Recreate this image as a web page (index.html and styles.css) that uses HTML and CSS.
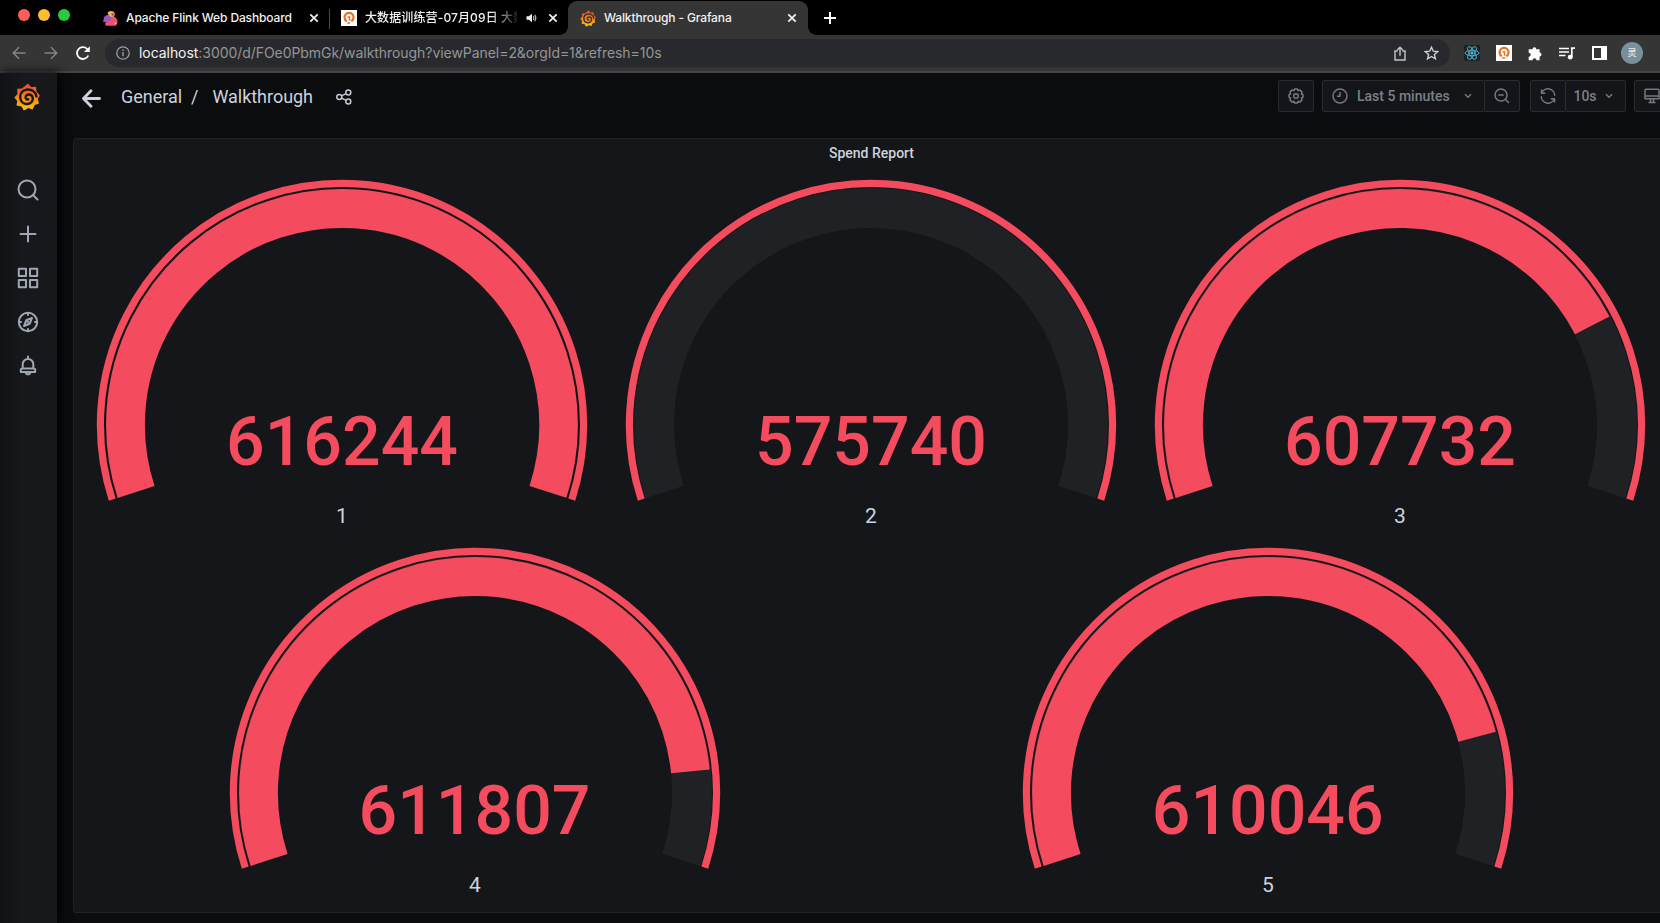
FILE: index.html
```html
<!DOCTYPE html>
<html lang="en">
<head>
<meta charset="utf-8">
<title>Walkthrough - Grafana</title>
<link rel="stylesheet" href="styles.css">
</head>
<body>
<svg class="defs" width="0" height="0">
  <defs>
    <linearGradient id="flame" x1="0" y1="0" x2="0" y2="1"><stop offset="0.1" stop-color="#f04e28"/><stop offset="1" stop-color="#fcc40c"/></linearGradient>
    <symbol id="grafana" viewBox="0 0 26 28">
      <path fill="url(#flame)" d="M14 0.500 L17 4 L22 3.800 L22.500 8.500 L25.800 12.500 L23.800 16 L25 20.500 L20.800 22 L18.500 26.500 L14.500 25 L9.800 27.500 L7.500 23.500 L2.500 22.500 L3.200 18 L0.300 14.500 L3.500 11 L3.200 5.800 L8 5.500 Z"/>
      <path fill="none" stroke="var(--hole)" stroke-width="2.400" stroke-linecap="round" d="M22.500 13.500 C21.500 8.500 17.500 6.300 13.500 6.500 C8.500 6.800 6 10.500 6.200 14.500 C6.500 18.500 9.500 21.200 13.500 21 C17 20.800 19 18 18.800 15.200 C18.500 12.600 16.500 11.200 14.300 11.500 C12 11.900 11.200 13.800 11.800 15.300 C12.300 16.400 13.300 16.700 14.200 16.300"/>
    </symbol>
    <symbol id="orange-q" viewBox="0 0 16 16">
      <rect width="16" height="16" fill="#fff"/>
      <path fill="none" stroke="#ec6f22" stroke-width="2.200" d="M5.800 11.200 A4.500 4.500 0 1 1 10.300 11.200"/>
      <path fill="none" stroke="#ec6f22" stroke-width="1.500" d="M6.500 7 H8.600 V10.700 M6.300 13 H9.200"/>
    </symbol>
    <symbol id="close" viewBox="0 0 10 10"><path d="M1.300 1.300 L8.700 8.700 M8.700 1.300 L1.300 8.700" stroke="#f4f4f4" stroke-width="1.700" fill="none"/></symbol>
  </defs>
</svg>

<div class="screen">
  <div class="tabstrip">
    <div class="lights"><i class="red"></i><i class="yellow"></i><i class="green"></i></div>
    <div class="tab tab-flink">
      <svg width="17" height="17" viewBox="0 0 17 17"><path fill="#e6526f" d="M6 8 C8 6 12 5.500 14 8 C15.500 9.500 16 11.500 15 14 L13.500 15.800 H4 C2.500 14.500 3.500 12 6 8 Z"/><path fill="#9a55c0" d="M2.500 6.500 C4 5 7 4.500 9 6 C10.500 8 9 10 7 11 C5 12 3 12.500 0.800 11.500 C2 10 1.500 8.500 2.500 6.500 Z"/><path fill="#e9b765" d="M5.500 2.500 L8 1 L11.500 1.500 L13 4 L12 6.500 L9 7 L6.500 5 Z"/><path fill="#d24a52" d="M9 3.500 L12 3 L12.500 5.500 L10 6 Z"/><path fill="#f0c36a" d="M12.500 13 L14 12.500 L14.500 14 L13 14.500 Z"/></svg>
      <span class="tab-title">Apache Flink Web Dashboard</span>
      <svg class="x" width="10" height="10"><use href="#close"/></svg>
    </div>
    <div class="tab tab-video">
      <svg width="16" height="16"><use href="#orange-q"/></svg>
      <span class="tab-title fade">大数据训练营-07月09日 大数</span>
      <svg class="speaker" width="11" height="10" viewBox="0 0 11 10"><path fill="#eee" d="M0.500 3.300 H2.800 L6 0.800 V9.200 L2.800 6.700 H0.500 Z"/><path fill="none" stroke="#bbb" stroke-width="1.200" d="M7.300 3 Q8.500 5 7.300 7 M8.800 1.800 Q10.800 5 8.800 8.200"/></svg>
      <svg class="x" width="10" height="10"><use href="#close"/></svg>
    </div>
    <div class="tab tab-active">
      <svg class="fav" width="16" height="17"><use href="#grafana"/></svg>
      <span class="tab-title">Walkthrough - Grafana</span>
      <svg class="x" width="10" height="10"><use href="#close"/></svg>
    </div>
    <svg class="newtab" width="14" height="14" viewBox="0 0 14 14"><path d="M7 1 V13 M1 7 H13" stroke="#fff" stroke-width="2"/></svg>
  </div>

  <div class="toolbar">
    <div class="nav">
      <svg width="14" height="14" viewBox="0 0 14 14"><path d="M13.500 7 H1.500 M7 1.300 L1.300 7 L7 12.700" fill="none" stroke="#858585" stroke-width="1.500"/></svg>
      <svg width="14" height="14" viewBox="0 0 14 14"><path d="M0.500 7 H12.500 M7 1.300 L12.700 7 L7 12.700" fill="none" stroke="#858585" stroke-width="1.500"/></svg>
      <svg width="14" height="14" viewBox="0 0 14 14"><path d="M12.300 9.500 A5.900 5.900 0 1 1 11 2.800 L12.500 4.300" fill="none" stroke="#fff" stroke-width="1.800"/><path d="M13.800 0.200 V6 H8 Z" fill="#fff"/></svg>
    </div>
    <div class="omnibox">
      <svg width="14" height="14" viewBox="0 0 14 14"><circle cx="7" cy="7" r="6.200" fill="none" stroke="#9b9b9c" stroke-width="1.300"/><path d="M7 6 V10.300 M7 3.500 V5" stroke="#9b9b9c" stroke-width="1.400"/></svg>
      <span class="url"><b>localhost</b>:3000/d/FOe0PbmGk/walkthrough?viewPanel=2&amp;orgId=1&amp;refresh=10s</span>
      <svg class="share-up" width="12" height="15" viewBox="0 0 12 15"><path d="M3.700 5 H1 V14 H11 V5 H8.300 M6 9.800 V1.500 M3.200 4 L6 1.300 L8.800 4" fill="none" stroke="#c4c4c4" stroke-width="1.400"/></svg>
      <svg class="star" width="15" height="14" viewBox="0 0 15 14"><path d="M7.500 1.200 L9.300 5.200 L13.700 5.600 L10.400 8.500 L11.400 12.800 L7.500 10.500 L3.600 12.800 L4.600 8.500 L1.300 5.600 L5.700 5.200 Z" fill="none" stroke="#d0d0d0" stroke-width="1.400"/></svg>
    </div>
    <div class="exts">
      <svg width="16" height="16" viewBox="0 0 16 16"><rect width="16" height="16" rx="1.500" fill="#202124"/><g fill="none" stroke="#4ba9c8" stroke-width="1"><ellipse cx="8" cy="8" rx="7" ry="2.700"/><ellipse cx="8" cy="8" rx="7" ry="2.700" transform="rotate(60 8 8)"/><ellipse cx="8" cy="8" rx="7" ry="2.700" transform="rotate(120 8 8)"/></g><circle cx="8" cy="8" r="1.400" fill="#5cc4e4"/></svg>
      <svg width="16" height="16"><use href="#orange-q"/></svg>
      <svg width="15" height="15" viewBox="0 0 15 15"><path fill="#fff" d="M1 3.200 H4.500 A1.900 1.900 0 1 1 8.300 3.200 H11.600 V6.600 A1.900 1.900 0 1 1 11.600 10.400 V14.300 H8.500 A2 2 0 1 0 4.500 14.300 H0.700 V10.800 A2 2 0 1 0 0.700 6.800 V3.200 Z"/></svg>
      <svg width="16" height="13" viewBox="0 0 16 13"><path d="M0 1.500 H10 M0 5 H10 M0 8.500 H6.500 M12.800 10 V1.200 H16" fill="none" stroke="#fff" stroke-width="1.700"/><circle cx="11.200" cy="10.200" r="2.400" fill="#fff"/></svg>
      <svg class="side" width="15" height="14" viewBox="0 0 15 14"><path fill="#fff" fill-rule="evenodd" d="M0 0 H15 V14 H0 Z M2 2 V12 H9 V2 Z"/></svg>
      <span class="avatar">灵</span>
    </div>
  </div>

  <div class="app">
    <nav class="sidebar">
      <svg class="brand" width="26" height="28"><use href="#grafana"/></svg>
      <svg width="22" height="22" viewBox="0 0 22 22"><circle cx="10" cy="10" r="8.500"/><path d="M16 16 L20.500 20.500"/></svg>
      <svg width="22" height="22" viewBox="0 0 22 22"><path d="M11 3.500 V18.500 M3.500 11 H18.500"/></svg>
      <svg width="22" height="22" viewBox="0 0 22 22"><path d="M1.800 1.800 H9 V9 H1.800 Z M13 1.800 H20.200 V9 H13 Z M1.800 13 H9 V20.200 H1.800 Z M13 13 H20.200 V20.200 H13 Z"/></svg>
      <svg width="22" height="22" viewBox="0 0 22 22"><circle cx="11" cy="11" r="9.200"/><path d="M15 7 L12.800 12.700 L7 15 L9.200 9.300 Z M11 2 V4 M11 18 V20 M2 11 H4 M18 11 H20"/><circle cx="11" cy="11" r="0.600"/></svg>
      <svg width="22" height="22" viewBox="0 0 22 22"><path d="M5.700 13.500 V9.200 A5.300 5.300 0 0 1 16.300 9.200 V13.500 M11 1.500 V3.900 M5.300 13.500 H16.700 Q18.200 13.500 18.200 15 V17 H3.800 V15 Q3.800 13.500 5.300 13.500 Z M8.500 17.500 A2.600 2.600 0 0 0 13.500 17.500"/></svg>
    </nav>
    <main class="content">
      <header class="dash-head">
        <svg class="back" width="19" height="19" viewBox="0 0 19 19"><path d="M17.500 9.500 H2 M9 1.800 L1.500 9.500 L9 17.200" fill="none" stroke="#ccd2dc" stroke-width="2.800" stroke-linecap="round" stroke-linejoin="round"/></svg>
        <span class="crumb">General</span><span class="slash">/</span><span class="crumb">Walkthrough</span>
        <svg class="share" width="16" height="16" viewBox="0 0 16 16"><g fill="none" stroke="#c3c8d1" stroke-width="1.500"><circle cx="3.300" cy="8" r="2.500"/><circle cx="12.300" cy="3.400" r="2.500"/><circle cx="12.300" cy="12.600" r="2.500"/><path d="M5.500 6.900 L10.100 4.600 M5.500 9.100 L10.100 11.400"/></g></svg>
        <div class="actions">
          <span class="btn gear"><svg width="16" height="16" viewBox="0 0 16 16"><path d="M6.600 1 H9.400 L10 2.700 L11.900 1.900 L14.100 4.100 L13.300 6 L15 6.600 V9.400 L13.300 10 L14.100 11.900 L11.900 14.100 L10 13.300 L9.400 15 H6.600 L6 13.300 L4.100 14.100 L1.900 11.900 L2.700 10 L1 9.400 V6.600 L2.700 6 L1.900 4.100 L4.100 1.900 L6 2.700 Z"/><circle cx="8" cy="8" r="2.300"/></svg></span>
          <div class="group">
            <span class="btn time"><svg width="16" height="16" viewBox="0 0 16 16"><circle cx="8" cy="8" r="7"/><path d="M8 4 V8.300 H5"/></svg><span>Last 5 minutes</span><svg class="chev" width="8" height="6" viewBox="0 0 8 6"><path d="M1 1.300 L4 4.300 L7 1.300"/></svg></span>
            <span class="btn zoom"><svg width="16" height="16" viewBox="0 0 16 16"><circle cx="7" cy="7" r="6"/><path d="M4.300 7 H9.700 M11.500 11.500 L15 15"/></svg></span>
          </div>
          <div class="group">
            <span class="btn sync"><svg width="16" height="16" viewBox="0 0 16 16"><path d="M1.500 1.500 V5.300 H5.300 M1.800 5 A6.700 6.700 0 0 1 14.700 7.700 M14.500 14.500 V10.700 H10.700 M14.200 11 A6.700 6.700 0 0 1 1.300 8.300"/></svg></span>
            <span class="btn rate"><span>10s</span><svg class="chev" width="8" height="6" viewBox="0 0 8 6"><path d="M1 1.300 L4 4.300 L7 1.300"/></svg></span>
          </div>
          <span class="btn tv"><svg width="16" height="16" viewBox="0 0 16 16"><path d="M2 1.300 H14 Q15 1.300 15 2.300 V10.700 H1 V2.300 Q1 1.300 2 1.300 Z M1 8 H15 M6.500 11 V14.300 M9.500 11 V14.300 M4.500 14.500 H11.500"/></svg></span>
        </div>
      </header>
      <section class="panel">
        <h2>Spend Report</h2>
        <div class="row three">
          <svg class="gauge" viewBox="-246 -246 492 368"><circle class="ring" r="241.600" pathLength="360"/><circle class="fill" r="216.500" pathLength="360" stroke-dasharray="216 360"/><text class="value" y="40">616244</text><text class="name" y="98">1</text></svg>
          <svg class="gauge" viewBox="-246 -246 492 368"><circle class="ring" r="241.600" pathLength="360"/><circle class="track" r="216.900" pathLength="360"/><text class="value" y="40">575740</text><text class="name" y="98">2</text></svg>
          <svg class="gauge" viewBox="-246 -246 492 368"><circle class="ring" r="241.600" pathLength="360"/><circle class="track" r="216.900" pathLength="360"/><circle class="fill" r="216.500" pathLength="360" stroke-dasharray="170.600 360"/><text class="value" y="40">607732</text><text class="name" y="98">3</text></svg>
        </div>
        <div class="row two">
          <svg class="gauge" viewBox="-246 -246 492 368"><circle class="ring" r="241.600" pathLength="360"/><circle class="track" r="216.900" pathLength="360"/><circle class="fill" r="216.500" pathLength="360" stroke-dasharray="192.300 360"/><text class="value" x="-0.500" y="40.500">611807</text><text class="name" y="98.500">4</text></svg>
          <svg class="gauge" viewBox="-246 -246 492 368"><circle class="ring" r="241.600" pathLength="360"/><circle class="track" r="216.900" pathLength="360"/><circle class="fill" r="216.500" pathLength="360" stroke-dasharray="182.960 360"/><text class="value" x="-0.300" y="40.500">610046</text><text class="name" y="98.500">5</text></svg>
        </div>
      </section>
    </main>
  </div>
</div>
</body>
</html>
```
FILE: styles.css
```css
* { box-sizing: border-box; }
body { margin: 0; background: #0b0c0e; font-family: Roboto, "Noto Sans CJK SC", sans-serif; }
svg { display: block; flex: none; }
.defs { position: absolute; }
.screen { width: 1660px; height: 923px; overflow: hidden; display: flex; flex-direction: column; }

.tabstrip { height: 35px; flex: none; background: #000; display: flex; align-items: flex-start; color: #f1f1f1; font: 500 12px/18px Inter, "Noto Sans CJK SC", sans-serif; }
.lights { display: flex; gap: 8px; padding: 9px 0 0 18px; width: 102px; }
.lights i { width: 12px; height: 12px; border-radius: 50%; }
.red { background: #ff5f57; }
.yellow { background: #febc2e; }
.green { background: #28c840; }
.tab { display: flex; align-items: center; height: 34px; margin-top: 1px; white-space: nowrap; }
.tab-title { letter-spacing: -0.13px; }
.tab .x { margin-left: auto; }
.tab-flink { width: 217px; }
.tab-flink .tab-title { margin-left: 7px; }
.tab-video { width: 229px; margin-left: 10px; padding-left: 12px; position: relative; }
.tab-video::before { content: ""; width: 1px; height: 20px; background: #4a4a4a; position: absolute; left: 0; top: 8px; }
.tab-video .tab-title { margin-left: 8px; width: 152px; letter-spacing: 0.12px; }
.fade { -webkit-mask-image: linear-gradient(90deg, #000 125px, transparent 156px); mask-image: linear-gradient(90deg, #000 125px, transparent 156px); }
.speaker { margin-left: 9px; }
.tab-active { --hole: #353535; width: 240px; margin-left: 10px; padding: 0 11px 0 12px; background: #353535; border-radius: 9px 9px 0 0; position: relative; }
.tab-active::before, .tab-active::after { content: ""; position: absolute; bottom: 0; width: 8px; height: 8px; }
.tab-active::before { left: -8px; background: radial-gradient(circle at 0 0, transparent 7.5px, #353535 8px); }
.tab-active::after { right: -8px; background: radial-gradient(circle at 100% 0, transparent 7.5px, #353535 8px); }
.tab-active .tab-title { margin-left: 8px; }
.newtab { margin: 11px 0 0 15px; }

.toolbar { height: 38px; flex: none; background: #353535; border-bottom: 2px solid #454545; display: flex; align-items: center; }
.nav { display: flex; gap: 18px; padding-left: 12px; width: 105px; }
.omnibox { width: 1345px; height: 28px; border-radius: 14px; background: #28292c; display: flex; align-items: center; padding: 0 11px; }
.url { margin-left: 9px; color: #949596; font: 400 14px/20px Inter, sans-serif; letter-spacing: -0.055px; }
.url b { font-weight: 400; color: #f2f2f2; }
.share-up { margin-left: auto; }
.star { margin-left: 18px; }
.exts { display: flex; align-items: center; gap: 16px; padding-left: 14px; }
.side { margin-left: 1px; }
.avatar { width: 22px; height: 22px; margin-left: -2px; border-radius: 50%; background: #78909c; color: #eee; font: 500 9px/22px "Noto Sans CJK SC", sans-serif; text-align: center; }

.app { flex: 1; display: flex; min-height: 0; }
.sidebar { --hole: #16181b; width: 57px; flex: none; background: linear-gradient(90deg, #111215, #17181b 40%); display: flex; flex-direction: column; align-items: center; gap: 22px; padding: 10px 0 0; z-index: 1; box-shadow: 2px 0 10px #000; }
.brand { margin: 0 0 46px -3px; }
.sidebar svg:not(.brand) { fill: none; stroke: #9fa7b3; stroke-width: 2; stroke-linejoin: round; stroke-linecap: round; margin-left: -1px; }
.content { flex: 1; min-width: 0; background: #0b0c0e; padding-left: 16px; }
.dash-head { height: 65px; display: flex; align-items: flex-start; padding: 7px 0 0 8px; color: #ccd2dc; font-size: 18px; line-height: 34px; letter-spacing: -0.03px; }
.back { margin: 9px 20px 0 1px; }
.slash { margin: 0 14px 0 9px; }
.share { margin: 9px 0 0 23.5px; }
.actions { margin-left: auto; display: flex; gap: 8px; letter-spacing: 0; }
.group { display: flex; }
.group:nth-child(3) { margin-left: 2px; }
.btn { height: 32px; border: 1px solid #2a2c30; border-radius: 2px; background: #141518; color: #7b8087; display: flex; align-items: center; justify-content: center; font: 500 14px/30px Roboto, sans-serif; }
.btn svg { fill: none; stroke: #74797f; stroke-width: 1.5; stroke-linejoin: round; }
.btn .chev { stroke-width: 1.5; }
.gear { width: 36px; }
.time { width: 163px; justify-content: flex-start; padding-left: 9px; }
.time span { margin: 0 14px 0 9px; }
.zoom { width: 36px; margin-left: -1px; }
.sync { width: 36px; }
.rate { width: 61px; margin-left: -1px; padding-right: 5px; }
.rate span { margin-right: 8px; }
.tv { width: 36px; margin-right: -10px; }

.panel { width: 1597px; height: 775px; background: #141619; border: 1px solid #202226; border-radius: 3px; padding: 0 5px 0 3px; }
.panel h2 { margin: 0 -1px 0 1px; height: 40px; padding-top: 6px; text-align: center; font-size: 14px; font-weight: 500; line-height: 16px; color: #ccd2dc; }
.row { display: grid; height: 368px; justify-items: center; padding-left: 1px; }
.three { grid-template-columns: repeat(3, 1fr); }
.two { grid-template-columns: repeat(2, 1fr); }
.gauge { width: 492px; height: 368px; overflow: visible; }
.gauge circle { fill: none; transform: rotate(162deg); }
.ring { stroke: #f44b5e; stroke-width: 7.2; stroke-dasharray: 216 360; }
.track { stroke: #202124; stroke-width: 40; stroke-dasharray: 216 360; }
.fill { stroke: #f44b5e; stroke-width: 38.8; }
.gauge text { text-anchor: middle; }
.value { font-size: 68px; font-weight: 500; fill: #f44b5e; }
.name { font-size: 21px; fill: #ccd2dc; }
```
